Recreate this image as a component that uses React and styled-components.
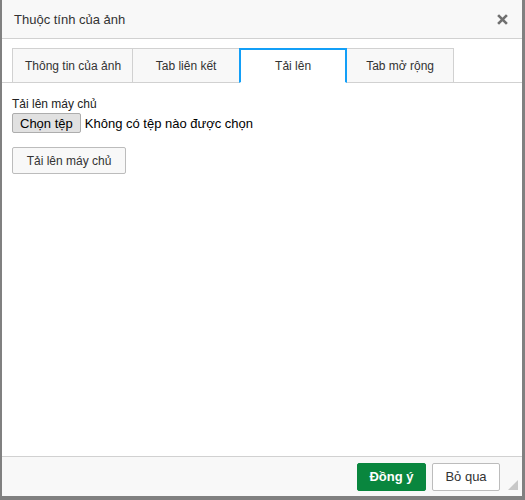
import React from 'react';
import styled, { createGlobalStyle } from 'styled-components';

const Global = createGlobalStyle`
  html, body {
    margin: 0;
    padding: 0;
    background: #808080;
    font-family: "Liberation Sans", Arial, sans-serif;
  }
`
const Page = styled.div`
  width: 525px;
  height: 500px;
  box-sizing: border-box;
  padding: 0 3px 4px 2px;
`
const Dialog = styled.div`
  height: 100%;
  background: #fff;
  display: flex;
  flex-direction: column;
`
const Title = styled.div`
  height: 38px;
  flex: none;
  display: flex;
  align-items: center;
  justify-content: space-between;
  padding: 0 14px 0 12px;
  background: #f8f8f8;
  border-bottom: 1px solid #d1d1d1;
  color: #333;
  font-size: 13px;
`
const Close = styled.svg`
  width: 11px;
  height: 11px;
  margin-top: 1px;
`
const TabBar = styled.div`
  display: flex;
  padding: 9px 10px 0;
  border-bottom: 1px solid #d1d1d1;
  flex: none;
`
const Tab = styled.div`
  position: relative;
  box-sizing: border-box;
  min-width: 108px;
  height: 35px;
  margin-bottom: -1px;
  margin-left: -1px;
  padding: 0 12px;
  display: flex;
  align-items: center;
  justify-content: center;
  white-space: nowrap;
  font-size: 12px;
  color: #333;
  background: ${p => (p.$active ? '#fff' : '#f8f8f8')};
  border: ${p => (p.$active ? '2px solid #139ff7' : '1px solid #d1d1d1')};
  border-bottom: ${p => (p.$active ? '1px solid #fff' : '1px solid #d1d1d1')};
  z-index: ${p => (p.$active ? 1 : 0)};
  &:first-child {
    margin-left: 0;
    min-width: 0;
    padding: 0 11px 0 12px;
  }
`
const Body = styled.div`
  flex: 1;
  padding: 14px 10px 0;
  color: #000;
`
const Label = styled.div`
  font-size: 12px;
  line-height: 14px;
  color: #222;
`
const FileRow = styled.div`
  display: flex;
  align-items: center;
  gap: 4px;
  margin-top: 2px;
  font-size: 13px;
`
const FileButton = styled.button`
  font-family: inherit;
  font-size: 13px;
  height: 20px;
  padding: 0 7px;
  background: #e1e1e1;
  border: 1px solid #adadad;
  border-radius: 2px;
  color: #000;
`
const Button = styled.button`
  font-family: "Liberation Sans", Arial, sans-serif;
  box-sizing: border-box;
  white-space: nowrap;
  height: ${p => (p.$tall ? '28px' : '27px')};
  width: ${p => (p.$width ? `${p.$width}px` : 'auto')};
  padding: 0 ${p => (p.$tall ? 0 : 12)}px;
  font-size: ${p => (p.$tall ? '13px' : '12px')};
  font-weight: ${p => (p.$primary ? 'bold' : 'normal')};
  color: ${p => (p.$primary ? '#fff' : '#333')};
  background: ${p => (p.$primary ? '#09863e' : p.$white ? '#fff' : '#f8f8f8')};
  border: 1px solid ${p => (p.$primary ? '#09863e' : '#bcbcbc')};
  border-radius: 2px;
`
const UploadButton = styled(Button)`
  margin-top: 14px;
`
const Footer = styled.div`
  position: relative;
  flex: none;
  height: 39px;
  border-top: 1px solid #d1d1d1;
  background: #f8f8f8;
  display: flex;
  align-items: center;
  justify-content: flex-end;
  gap: 6px;
  padding: 0 22px 0 0;
`
const Grip = styled.div`
  position: absolute;
  right: 4px;
  bottom: 6px;
  width: 0;
  height: 0;
  border-left: 10px solid transparent;
  border-bottom: 10px solid #c8c8c8;
`

const App = () => {
  return (
    <Page>
      <Global />
      <Dialog>
        <Title>
          <span>Thuộc tính của ảnh</span>
          <Close viewBox="0 0 10 10">
            <path d="M1 1L9 9M9 1L1 9" stroke="#707070" strokeWidth="2.4" strokeLinecap="butt" />
          </Close>
        </Title>
        <TabBar>
          <Tab>Thông tin của ảnh</Tab>
          <Tab>Tab liên kết</Tab>
          <Tab $active>Tải lên</Tab>
          <Tab>Tab mở rộng</Tab>
        </TabBar>
        <Body>
          <Label>Tải lên máy chủ</Label>
          <FileRow>
            <FileButton>Chọn tệp</FileButton>
            <span>Không có tệp nào được chọn</span>
          </FileRow>
          <UploadButton $width={114}>Tải lên máy chủ</UploadButton>
        </Body>
        <Footer>
          <Button $primary $tall $width={69}>Đồng ý</Button>
          <Button $white $tall $width={68}>Bỏ qua</Button>
          <Grip />
        </Footer>
      </Dialog>
    </Page>
  );
};

export default App;
